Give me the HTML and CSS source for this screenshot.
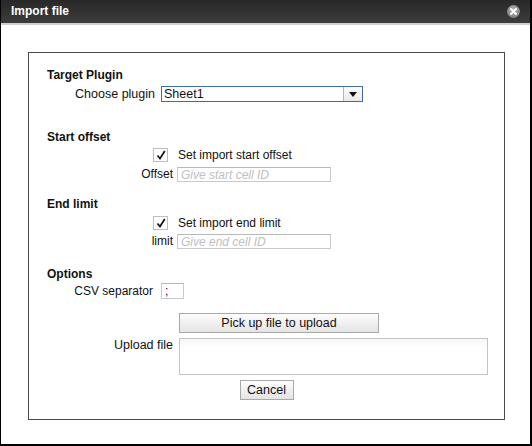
FILE: index.html
```html
<!DOCTYPE html>
<html>
<head>
<meta charset="utf-8">
<link rel="stylesheet" href="styles.css">
</head>
<body>
<div class="window">
  <div class="titlebar">
    <span class="title">Import file</span>
    <span class="close"><svg width="13" height="13" viewBox="0 0 13 13"><defs><radialGradient id="g" cx="50%" cy="40%" r="60%"><stop offset="0" stop-color="#b4b4b4"/><stop offset="1" stop-color="#808080"/></radialGradient></defs><circle cx="6.5" cy="6.5" r="6.5" fill="url(#g)"/><path d="M4 4 L9 9 M9 4 L4 9" stroke="#fff" stroke-width="2" stroke-linecap="round"/></svg></span>
  </div>
  <div class="content">
    <div class="panel">
      <h3 class="heading h-plugin">Target Plugin</h3>
      <div class="row row-plugin">
        <span class="lbl lbl-plugin">Choose plugin</span>
        <div class="select">
          <span class="select-value">Sheet1</span>
          <span class="select-btn"><svg width="8" height="5" viewBox="0 0 8 5"><path d="M0 0 H8 L4 5 Z" fill="#111"/></svg></span>
        </div>
      </div>

      <h3 class="heading h-start">Start offset</h3>
      <div class="row row-check">
        <span class="check"><svg width="12" height="12" viewBox="0 0 12 12"><path d="M2.5 6.5 L5 9.5 L9.8 2" stroke="#111" stroke-width="1.7" fill="none"/></svg></span>
        <span class="check-text">Set import start offset</span>
      </div>
      <div class="row row-field">
        <span class="lbl lbl-field">Offset</span>
        <input class="text" type="text" placeholder="Give start cell ID">
      </div>

      <h3 class="heading h-end">End limit</h3>
      <div class="row row-check row-check2">
        <span class="check"><svg width="12" height="12" viewBox="0 0 12 12"><path d="M2.5 6.5 L5 9.5 L9.8 2" stroke="#111" stroke-width="1.7" fill="none"/></svg></span>
        <span class="check-text">Set import end limit</span>
      </div>
      <div class="row row-field row-field2">
        <span class="lbl lbl-field">limit</span>
        <input class="text" type="text" placeholder="Give end cell ID">
      </div>

      <h3 class="heading h-options">Options</h3>
      <div class="row row-csv">
        <span class="lbl lbl-csv">CSV separator</span>
        <input class="text sep" type="text" value=";">
      </div>

      <div class="row row-pick">
        <button class="btn btn-pick">Pick up file to upload</button>
      </div>
      <div class="row row-upload">
        <span class="lbl lbl-upload">Upload file</span>
        <div class="filebox"></div>
      </div>
      <div class="row row-cancel">
        <button class="btn btn-cancel">Cancel</button>
      </div>
    </div>
  </div>
</div>
</body>
</html>
```

FILE: styles.css
```css
* { box-sizing: border-box; }
html, body { margin: 0; padding: 0; background: #fff; }
body { font-family: "Liberation Sans", Arial, sans-serif; font-size: 12px; color: #111; }

.window {
  width: 532px;
  height: 446px;
  border-left: 1px solid #000;
  border-right: 2px solid #000;
  border-bottom: 2px solid #000;
  display: flex;
  flex-direction: column;
  background: #fff;
}
.titlebar {
  height: 25px;
  flex: none;
  background: linear-gradient(#282828, #3c3c3c);
  border-bottom: 2px solid #cfcfcf;
  display: flex;
  align-items: center;
  justify-content: space-between;
  padding: 0 10px 2px 10px;
}
.title { color: #fff; font-weight: bold; font-size: 12px; }
.close { display: flex; margin-top: 1px; }

.content {
  flex: 1;
  padding: 27px 25px 24px 27px;
  display: flex;
}
.panel {
  width: 477px;
  height: 368px;
  border: 1px solid #4a4a4a;
  padding: 15px 0 0 18px;
  display: flex;
  flex-direction: column;
}

.heading { margin: 0; font-size: 12px; font-weight: bold; line-height: 15px; height: 15px; }
.h-start { margin-top: 28px; }
.h-end { margin-top: 15px; }
.h-options { margin-top: 18px; }

.row { display: flex; align-items: center; }
.row-plugin { margin-top: 3px; height: 16px; }
.lbl { text-align: right; flex: none; line-height: 15px; }
.lbl-plugin { width: 108px; margin-right: 6px; font-size: 12.5px; }

.select {
  width: 202px;
  height: 16px;
  border: 1px solid #3f6d9f;
  display: flex;
  background: #fff;
}
.select-value { flex: 1; padding-left: 2px; line-height: 14px; font-size: 12.5px; }
.select-btn {
  width: 19px;
  border-left: 1px solid #a8b8c8;
  background: linear-gradient(#ffffff, #e9e9e9);
  display: flex;
  align-items: center;
  justify-content: center;
}
.select-btn svg { margin-top: 1px; }

.row-check { margin-top: 3px; height: 14px; padding-left: 106px; }
.row-check2 { margin-top: 4px; }
.check {
  width: 15px; height: 14px;
  border: 1px solid #bdbdbd;
  background: #fff;
  display: flex; align-items: center; justify-content: center;
  flex: none;
}
.check-text { margin-left: 10px; font-size: 12px; line-height: 15px; }

.row-field { margin-top: 5px; height: 15px; }
.row-field2 { margin-top: 4px; }
.lbl-field { width: 126px; margin-right: 4px; font-size: 12px; }
.text {
  font-family: "Liberation Sans", Arial, sans-serif;
  font-size: 12px;
  height: 15px;
  width: 154px;
  border: 1px solid #c9c9c9;
  border-top-color: #b8b8b8;
  padding: 0 3px;
  margin: 0;
  outline: none;
  background: #fff;
  color: #111;
}
.text::placeholder { color: #c0c0c0; font-style: italic; }

.row-csv { margin-top: 1px; height: 16px; }
.lbl-csv { width: 106px; margin-right: 8px; font-size: 12px; }
.sep { width: 23px; height: 16px; padding: 0 3px; }

.row-pick { margin-top: 14px; padding-left: 132px; }
.btn {
  font-family: "Liberation Sans", Arial, sans-serif;
  font-size: 12.5px;
  color: #111;
  height: 20px;
  border: 1px solid #a9a9a9;
  border-radius: 0;
  background: linear-gradient(#fdfdfd, #e4e4e4);
  padding: 0;
  margin: 0;
  line-height: 18px;
}
.btn-pick { width: 200px; }

.row-upload { margin-top: 5px; align-items: flex-start; }
.lbl-upload { width: 126px; margin-right: 6px; font-size: 12.5px; }
.filebox {
  width: 309px;
  height: 37px;
  border: 1px solid #c4c4c4;
  background: linear-gradient(#f6f6f6, #fff 8px);
}

.row-cancel { margin-top: 5px; justify-content: center; padding-right: 18px; }
.btn-cancel { width: 54px; }
```
